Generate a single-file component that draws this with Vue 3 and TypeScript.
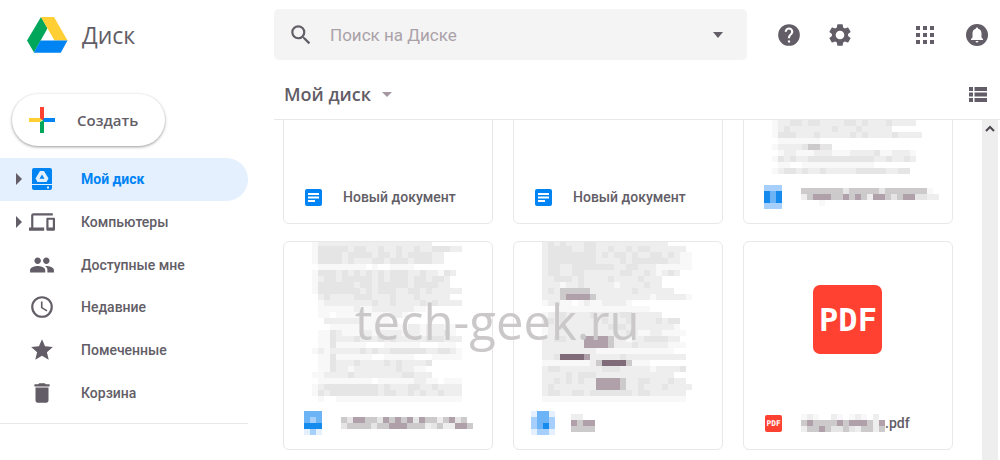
<script setup lang="ts">
import { ref } from 'vue'

interface NavItem {
  label: string
  icon: string
  expandable?: boolean
}

interface DriveFile {
  id: number
  kind: 'doc' | 'pdf' | 'masked'
  title?: string
  iconMask?: string[]
  titleMask?: string[]
  preview?: string[]
  offset?: number
}

interface Cell {
  x: number
  y: number
  w: number
  level: string
}

const CELL = 6
const query = ref('')
const active = ref('Мой диск')

const navItems: NavItem[] = [
  { label: 'Мой диск', icon: 'drive', expandable: true },
  { label: 'Компьютеры', icon: 'devices', expandable: true },
  { label: 'Доступные мне', icon: 'people' },
  { label: 'Недавние', icon: 'clock' },
  { label: 'Помеченные', icon: 'star' },
  { label: 'Корзина', icon: 'trash' },
]

const files: DriveFile[] = [
  { id: 1, kind: 'doc', title: 'Новый документ' },
  { id: 2, kind: 'doc', title: 'Новый документ' },
  {
    id: 3,
    kind: 'masked',
    offset: 4,
    iconMask: ['bbb', 'dcd', 'dcd', 'bbb'],
    titleMask: ['44444443444443444444410', '24555445454255434553322', '00010000000000000000000'],
    preview: [
      ...Array<string>(18).fill(''),
      '1223323322223323222322220',
      '1232222222322232222200000',
      '1333222322222323222232222',
      '0111111100000000000000000',
      '1222234433000000000000000',
      '0122111222111222231122210',
      '1323223333333333322322320',
      '0110011111111111100000000',
      '1233232232222233333223300',
    ],
  },
  {
    id: 4,
    kind: 'masked',
    offset: 2,
    iconMask: ['ccc', 'cbc', 'ddd', 'aba'],
    titleMask: ['4355443545453544245340', '3444434455544423422554'],
    preview: [
      '1222222222222222222200000',
      '1333332332232232232233322',
      '1333323333233232333322000',
      '1333323222332333233322000',
      '0111111110100111100000000',
      '1333232323232333223221320',
      '1233233333232333233233200',
      '1333333233233333233332200',
      '1333333323233322332322222',
      '0232222333222322232222200',
      '0122222222322322223232222',
      '0111111211222222211000000',
      '0110111111111221000000000',
      '0022222211111000000000000',
      '0001111111111111221222110',
      '0113211122122221221222310',
      '0113222322232322222333222',
      '0113111110001111110001110',
      '1212222232322333333223321',
      '0113111111001111100011111',
      '0113222322223232222300000',
      '0113221222222232211000000',
      '1122223222222223322200000',
      '0111111111011111122110111',
      '1233333333323222332232222',
      '1323333333323322323223222',
      '0100111111111111111111111',
    ],
  },
  {
    id: 5,
    kind: 'masked',
    offset: 2,
    iconMask: ['acca', 'bccb', 'bcdb', 'abba'],
    titleMask: ['2200', '5455', '4444'],
    preview: [
      '2323222332222222222220000',
      '2333322332232232332222220',
      '2333333332323323223323211',
      '2333333332222323333332211',
      '2332233333332233222111111',
      '2332233222222332232123200',
      '2233323222232222322200000',
      '2221223222221222232200000',
      '2324444422222223222222000',
      '2224555542222222221222221',
      '1221101211222210000000000',
      '0001111111111111110000000',
      '1223222232222332222200000',
      '2323222222322232222323300',
      '1223222222233322222222100',
      '1222222222222232112211110',
      '2233222555542212233332200',
      '2222222555542223222221110',
      '2222222221111111111111000',
      '2236666522222322222222220',
      '1111111124666641110000000',
      '2332222222333222221222230',
      '2222323332222222222222000',
      '2232323225555422332223220',
      '2322222225555422322232222',
      '2332233233333332332222220',
      '1111111111111111111111110',
    ],
  },
  {
    id: 6,
    kind: 'pdf',
    title: '.pdf',
    titleMask: ['12100210121020', '45444454555425', '24454334324424'],
  },
]

function cells(rows: string[], offset = 0): Cell[] {
  const out: Cell[] = []
  rows.forEach((row, r) => {
    let start = 0
    while (start < row.length) {
      let end = start + 1
      while (end < row.length && row[end] === row[start]) end++
      if (row[start] !== '0') {
        out.push({ x: start * CELL, y: r * CELL - offset, w: (end - start) * CELL, level: 'm' + row[start] })
      }
      start = end
    }
  })
  return out
}

const columns = (rows: string[]): number => Math.max(...rows.map((row) => row.length)) * CELL
</script>

<template>
  <div class="app">
    <aside class="side">
      <a class="brand" href="#">
        <svg width="42" height="38" viewBox="0 0 42 38" aria-hidden="true">
          <path fill="#00a65a" d="M15 1 21.500 12.300 8 36.500 1 24.500z" />
          <path fill="#ffcf33" d="M15 1H28L41.500 24.500H28.500z" />
          <path fill="#0084f4" d="M14.500 24.500H41.500L34.800 36.700H7.800z" />
        </svg>
        <span>Диск</span>
      </a>
      <button class="create" type="button">
        <svg width="26" height="26" viewBox="0 0 26 26" aria-hidden="true">
          <path fill="#ff4131" d="M11 0h4v13h-4z" />
          <path fill="#0084f4" d="M15 11h11v4H13z" />
          <path fill="#00a65a" d="M11 15l4-2v13h-4z" />
          <path fill="#ffcf33" d="M0 11h11l2 2-2 2H0z" />
        </svg>
        <span>Создать</span>
      </button>
      <nav class="nav">
        <a
          v-for="item in navItems"
          :key="item.label"
          href="#"
          class="nav-item"
          :class="{ active: item.label === active }"
          @click.prevent="active = item.label"
        >
          <span class="caret">
            <svg v-if="item.expandable" width="6" height="12" viewBox="0 0 6 12"><path d="M0 0l6 6-6 6z" /></svg>
          </span>
          <svg v-if="item.icon === 'drive'" class="nav-icon" viewBox="0 0 26 26">
            <path d="M5 2h16q2 0 2 2v14H3V4q0-2 2-2zM3 19h20v3q0 2-2 2H5q-2 0-2-2z" />
            <path class="cut" d="M11 5h4l4.500 7.500-2 3.500h-9l-2-3.500z" />
            <path d="M13 8.500l2.500 4.200h-5z" />
            <path class="cut" d="M18 20.500h2v2h-2z" />
          </svg>
          <svg v-else-if="item.icon === 'devices'" class="nav-icon" viewBox="0 0 24 24">
            <path d="M4 6h18V4H4c-1.100 0-2 .9-2 2v11H0v3h14v-3H4V6zm19 2h-6c-.55 0-1 .45-1 1v10c0 .55.45 1 1 1h6c.55 0 1-.45 1-1V9c0-.55-.45-1-1-1zm-1 9h-4v-7h4v7z" />
          </svg>
          <svg v-else-if="item.icon === 'people'" class="nav-icon" viewBox="0 0 24 24">
            <path d="M16 11c1.660 0 2.990-1.340 2.990-3S17.660 5 16 5s-3 1.340-3 3 1.340 3 3 3zm-8 0c1.660 0 2.990-1.340 2.990-3S9.660 5 8 5 5 6.340 5 8s1.340 3 3 3zm0 2c-2.330 0-7 1.170-7 3.500V19h14v-2.500C15 14.170 10.330 13 8 13zm8 0c-.29 0-.62.02-.97.05 1.160.84 1.970 1.970 1.970 3.450V19h6v-2.500c0-2.330-4.670-3.500-7-3.500z" />
          </svg>
          <svg v-else-if="item.icon === 'clock'" class="nav-icon" viewBox="0 0 24 24">
            <path d="M12 2a10 10 0 1 0 0 20 10 10 0 0 0 0-20zm0 18a8 8 0 1 1 0-16 8 8 0 0 1 0 16zm.5-13H11v6l5.250 3.150.75-1.230-4.500-2.670z" />
          </svg>
          <svg v-else-if="item.icon === 'star'" class="nav-icon" viewBox="0 0 24 24">
            <path d="M12 17.270L18.180 21l-1.640-7.030L22 9.240l-7.190-.61L12 2 9.190 8.630 2 9.240l5.460 4.730L5.820 21z" />
          </svg>
          <svg v-else class="nav-icon" viewBox="0 0 24 24">
            <path d="M6 19c0 1.100.9 2 2 2h8c1.100 0 2-.9 2-2V7H6v12zM19 4h-3.500l-1-1h-5l-1 1H5v2h14V4z" />
          </svg>
          <span>{{ item.label }}</span>
        </a>
      </nav>
      <hr class="rule" />
    </aside>

    <main class="main">
      <header class="top">
        <form class="search" role="search" @submit.prevent>
          <button type="submit" aria-label="Поиск">
            <svg width="26" height="26" viewBox="0 0 24 24">
              <path d="M15.500 14h-.79l-.28-.27A6.470 6.470 0 0 0 16 9.500 6.500 6.500 0 1 0 9.500 16c1.610 0 3.090-.59 4.230-1.570l.27.28v.79l5 4.990L20.490 19l-4.990-5zm-6 0a4.500 4.500 0 1 1 0-9 4.500 4.500 0 0 1 0 9z" />
            </svg>
          </button>
          <input v-model="query" type="text" placeholder="Поиск на Диске" aria-label="Поиск на Диске" />
          <button type="button" aria-label="Параметры поиска">
            <svg width="10" height="6" viewBox="0 0 10 6"><path d="M0 0h10L5 6z" /></svg>
          </button>
        </form>
        <div class="tools">
          <button type="button" aria-label="Справка">
            <svg width="26" height="26" viewBox="0 0 24 24">
              <path d="M12 2a10 10 0 1 0 0 20 10 10 0 0 0 0-20zm1 17h-2v-2h2v2zm2.070-7.750l-.9.920C13.450 12.900 13 13.500 13 15h-2v-.5c0-1.100.45-2.100 1.170-2.830l1.240-1.260c.37-.36.59-.86.59-1.410a2 2 0 1 0-4 0H8a4 4 0 1 1 8 0c0 .88-.36 1.680-.93 2.250z" />
            </svg>
          </button>
          <button type="button" aria-label="Настройки">
            <svg width="26" height="26" viewBox="0 0 24 24">
              <path d="M19.430 12.980c.04-.32.07-.64.07-.98s-.03-.66-.07-.98l2.110-1.650c.19-.15.24-.42.12-.64l-2-3.460c-.12-.22-.39-.3-.61-.22l-2.490 1c-.52-.4-1.080-.73-1.690-.98l-.38-2.650A.488.488 0 0 0 14 2h-4c-.25 0-.46.18-.49.42l-.38 2.650c-.61.25-1.170.59-1.690.98l-2.490-1c-.23-.09-.49 0-.61.22l-2 3.460c-.13.22-.07.49.12.64l2.110 1.650c-.04.32-.07.65-.07.98s.03.66.07.98l-2.110 1.650c-.19.15-.24.42-.12.64l2 3.460c.12.22.39.3.61.22l2.490-1c.52.4 1.080.73 1.690.98l.38 2.650c.03.24.24.42.49.42h4c.25 0 .46-.18.49-.42l.38-2.650c.61-.25 1.170-.59 1.690-.98l2.490 1c.23.09.49 0 .61-.22l2-3.460c.12-.22.07-.49-.12-.64l-2.110-1.650zM12 16a4 4 0 1 1 0-8 4 4 0 0 1 0 8z" />
            </svg>
          </button>
          <button type="button" class="apps" aria-label="Приложения">
            <svg width="18" height="18" viewBox="0 0 18 18">
              <path d="M0 0h4v4H0zM7 0h4v4H7zM14 0h4v4h-4zM0 7h4v4H0zM7 7h4v4H7zM14 7h4v4h-4zM0 14h4v4H0zM7 14h4v4H7zM14 14h4v4h-4z" />
            </svg>
          </button>
          <button type="button" aria-label="Уведомления">
            <svg width="22" height="22" viewBox="0 0 22 22">
              <circle cx="11" cy="11" r="11" />
              <path fill="#fff" d="M11 3.500q1.200 0 1.200 1.300C14.700 5.500 15.500 7.500 15.500 9.500v4l1.500 1.500v1H5v-1l1.500-1.500v-4c0-2 .8-4 3.300-4.700q0-1.300 1.200-1.300zM9.500 17h3q-.3 1.500-1.500 1.500T9.500 17z" />
            </svg>
          </button>
        </div>
      </header>

      <div class="path">
        <button type="button" class="crumb">
          <span>Мой диск</span>
          <svg width="10" height="5" viewBox="0 0 10 5"><path d="M0 0h10L5 5z" /></svg>
        </button>
        <button type="button" aria-label="Список">
          <svg width="18" height="15" viewBox="0 0 18 15">
            <path d="M0 0h4v4H0zM5.500 0H18v4H5.500zM0 5.500h4v4H0zM5.500 5.500H18v4H5.500zM0 11h4v4H0zM5.500 11H18v4H5.500z" />
          </svg>
        </button>
      </div>

      <section class="content">
        <div class="viewport">
          <div class="grid">
            <article v-for="file in files" :key="file.id" class="card">
              <div class="preview" :class="{ centered: file.kind === 'pdf' }">
                <svg
                  v-if="file.preview"
                  class="mosaic"
                  :width="columns(file.preview)"
                  :height="file.preview.length * CELL - (file.offset ?? 0)"
                >
                  <rect
                    v-for="(c, i) in cells(file.preview, file.offset)"
                    :key="i"
                    :class="c.level"
                    :x="c.x"
                    :y="c.y"
                    :width="c.w"
                    :height="CELL"
                  />
                </svg>
                <svg v-else-if="file.kind === 'pdf'" width="69" height="69" viewBox="0 0 69 69">
                  <rect class="pdf" width="69" height="69" rx="7" />
                  <text class="pdf-text" x="35" y="46">PDF</text>
                </svg>
              </div>
              <footer class="foot">
                <span class="file-icon">
                  <svg v-if="file.kind === 'doc'" width="17" height="17" viewBox="0 0 17 17">
                    <rect width="17" height="17" rx="2" fill="#0084f4" />
                    <path fill="#fff" d="M3 4h11v2H3zM3 7.500h11v2H3zM3 11h7v2H3z" />
                  </svg>
                  <svg v-else-if="file.kind === 'pdf'" width="17" height="17" viewBox="0 0 69 69">
                    <rect class="pdf" width="69" height="69" rx="8" />
                    <text class="pdf-text" x="35" y="46">PDF</text>
                  </svg>
                  <svg
                    v-else-if="file.iconMask"
                    class="mosaic"
                    :width="columns(file.iconMask)"
                    :height="file.iconMask.length * CELL"
                  >
                    <rect
                      v-for="(c, i) in cells(file.iconMask)"
                      :key="i"
                      :class="c.level"
                      :x="c.x"
                      :y="c.y"
                      :width="c.w"
                      :height="CELL"
                    />
                  </svg>
                </span>
                <svg
                  v-if="file.titleMask"
                  class="mosaic"
                  :width="columns(file.titleMask)"
                  :height="file.titleMask.length * CELL"
                >
                  <rect
                    v-for="(c, i) in cells(file.titleMask)"
                    :key="i"
                    :class="c.level"
                    :x="c.x"
                    :y="c.y"
                    :width="c.w"
                    :height="CELL"
                  />
                </svg>
                <span v-if="file.title">{{ file.title }}</span>
              </footer>
            </article>
          </div>
          <div class="watermark">tech-geek.ru</div>
        </div>
        <div class="scroll">
          <button type="button" aria-label="Вверх">
            <svg width="10" height="7" viewBox="0 0 10 7"><path d="M1 6l4-4 4 4" /></svg>
          </button>
        </div>
      </section>
    </main>
  </div>
</template>

<style>
body {
  margin: 0;
  background: #fff;
}
</style>

<style scoped>
.app {
  display: grid;
  grid-template-columns: 248px minmax(0, 1fr);
  column-gap: 26px;
  height: 100vh;
  overflow: hidden;
  color: #625d66;
  font: 500 14px/20px Roboto, "Liberation Sans", sans-serif;
}
svg {
  display: block;
  flex: none;
  fill: #625d66;
}
button {
  display: flex;
  align-items: center;
  padding: 0;
  border: 0;
  background: none;
  color: inherit;
  font: inherit;
}
a {
  color: inherit;
  text-decoration: none;
}
.brand {
  display: flex;
  align-items: center;
  gap: 14px;
  height: 38px;
  padding: 16px 0 0 26px;
  font: 400 23px/38px "Open Sans", sans-serif;
}
.create {
  gap: 22px;
  height: 52px;
  margin: 40px 0 0 12px;
  padding: 0 27px 0 17px;
  border-radius: 26px;
  background: #fff;
  box-shadow: 0 1px 3px #999;
  font: 600 15px/20px "Open Sans", sans-serif;
}
.nav {
  display: grid;
  grid-auto-rows: 1fr;
  height: 256px;
  margin-top: 12px;
}
.nav-item {
  display: flex;
  align-items: center;
  border-radius: 0 22px 22px 0;
}
.caret {
  width: 13px;
  padding-left: 16px;
}
.nav-icon {
  width: 26px;
  height: 26px;
  margin-right: 26px;
}
.active {
  background: #e4f0fe;
  color: #0084f4;
  font-weight: 700;
}
.active .nav-icon {
  fill: #0084f4;
}
.nav-icon .cut {
  fill: #e4f0fe;
}
.rule {
  margin: 9px 0 0;
  border: 0;
  border-top: 1px solid #e8e8e8;
}
.main {
  display: flex;
  flex-direction: column;
  min-width: 0;
  min-height: 0;
}
.top {
  display: flex;
  align-items: center;
  justify-content: space-between;
  padding: 9px 12px 0 0;
}
.search {
  display: flex;
  flex: 0 1 473px;
  align-items: center;
  box-sizing: border-box;
  height: 51px;
  padding: 0 24px 0 14px;
  border-radius: 5px;
  background: #f4f4f4;
}
.search input {
  flex: 1;
  min-width: 0;
  margin-left: 16px;
  padding: 0;
  border: 0;
  outline: 0;
  background: none;
  color: #625d66;
  font: 400 17px/24px Roboto, sans-serif;
}
.search input::placeholder {
  color: #aaa1a8;
  opacity: 1;
}
.tools {
  display: flex;
  align-items: center;
  gap: 25px;
}
.apps {
  margin: 0 7px 0 38px;
}
.path {
  display: flex;
  align-items: center;
  justify-content: space-between;
  height: 59px;
  padding: 0 13px 0 10px;
  border-bottom: 1px solid #e8e8e8;
}
.path > button {
  margin-top: 9px;
}
.crumb {
  gap: 11px;
  font: 600 18px/26px "Open Sans", sans-serif;
}
.crumb svg {
  fill: #a598a2;
}
.content {
  display: flex;
  flex: 1;
  min-height: 0;
  padding-right: 2px;
}
.viewport {
  position: relative;
  flex: 1;
  min-width: 0;
  padding: 0 29px 0 9px;
  overflow: hidden;
}
.grid {
  display: grid;
  grid-template-columns: repeat(3, minmax(0, 1fr));
  gap: 17px 20px;
  margin-top: -105px;
}
.card {
  border: 1px solid #e8e8e8;
  border-radius: 6px;
}
.preview {
  display: flex;
  justify-content: center;
  height: 155px;
  padding-right: 2px;
}
.centered {
  align-items: center;
}
.foot {
  display: flex;
  align-items: center;
  height: 52px;
  padding-left: 20px;
}
.file-icon {
  display: flex;
  justify-content: center;
  width: 18px;
  margin-right: 21px;
}
.foot .file-icon + .mosaic {
  margin-left: -2px;
}
.pdf {
  fill: #ff4131;
}
.pdf-text {
  fill: #fff;
  font: 700 32px "DejaVu Sans Mono", monospace;
  text-anchor: middle;
}
.mosaic {
  shape-rendering: crispEdges;
}
.m1 { fill: #f8f8f8; }
.m2 { fill: #eeeeee; }
.m3 { fill: #e5e5e5; }
.m4 { fill: #cdcacc; }
.m5 { fill: #b0a0aa; }
.m6 { fill: #806b78; }
.ma { fill: #e4f0fe; }
.mb { fill: #a6d0fb; }
.mc { fill: #6cb4f6; }
.md { fill: #168bee; }
.watermark {
  position: absolute;
  top: 168px;
  left: 81px;
  color: #cac8c9;
  font: 400 49px/66px "Open Sans", sans-serif;
}
.scroll {
  display: flex;
  justify-content: center;
  align-items: flex-start;
  width: 16px;
  background: #eee;
}
.scroll button {
  height: 17px;
}
.scroll svg {
  fill: none;
  stroke: #4c474f;
  stroke-width: 2;
}
</style>
